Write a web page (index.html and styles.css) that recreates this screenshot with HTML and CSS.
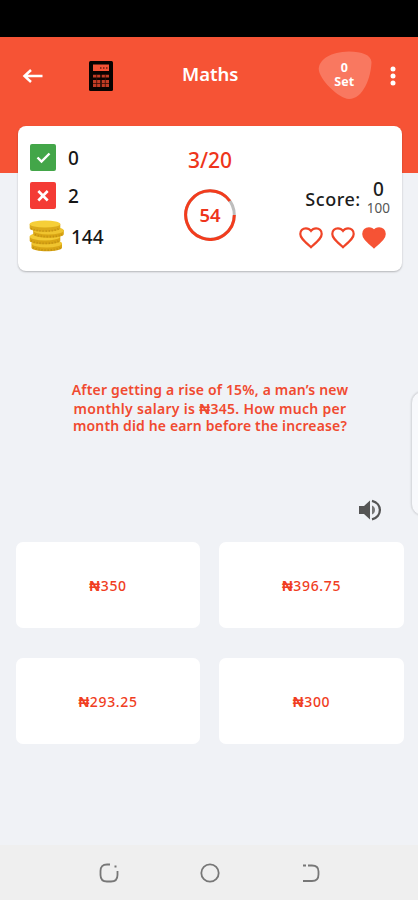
FILE: index.html
```html
<!DOCTYPE html>
<html lang="en">
<head>
<meta charset="utf-8">
<meta name="viewport" content="width=device-width">
<title>Maths</title>
<link rel="stylesheet" href="styles.css">
</head>
<body>
<div class="status"></div>
<header class="header">
  <div class="bar">
    <svg class="back" width="22" height="16" viewBox="0 0 22 16"><path d="M20.500 8H3M9 2L2.500 8L9 14" fill="none" stroke="#fff" stroke-width="2.500"/></svg>
    <svg class="calc" width="24" height="30" viewBox="0 0 24 30">
      <rect width="24" height="30" rx="1.500" fill="#080301"/>
      <rect x="4" y="3.500" width="16" height="6.500" fill="#f65335"/>
      <path d="M11 7h1.500M14 7h1.500M17 7h1.500" stroke="#6d1d10" stroke-width="1.500"/>
      <path d="M4 15.200h7.300M12.700 15.200H20" stroke="#c23c25" stroke-width="2.800"/>
      <path d="M4 22.500h7.300M12.700 22.500H20" stroke="#c23c25" stroke-width="7"/>
      <path d="M7.700 13v13M16.300 13v13M4 22.500h16" stroke="#3a0f08" stroke-width=".8"/>
    </svg>
    <h1 class="title">Maths</h1>
    <div class="set">
      <svg class="blob" width="54" height="49" viewBox="0 0 54 49"><path d="M1 16C3 8 12 1 31 .5C44 .5 53 4 53.500 11C53 27 45 48 31 48C20 48 -2 25 1 16Z" fill="#f97860"/></svg>
      <span>0</span><span>Set</span>
    </div>
    <svg class="more" width="6" height="20" viewBox="0 0 6 20" fill="#fff"><circle cx="3" cy="3" r="2.500"/><circle cx="3" cy="10" r="2.500"/><circle cx="3" cy="17" r="2.500"/></svg>
  </div>
</header>
<section class="card">
  <div class="stats">
    <div class="stat"><svg width="26" height="27" viewBox="0 0 26 27"><rect width="26" height="27" rx="2" fill="#43a649"/><path d="M7.500 13.500L11.500 17.500L19.500 9.500" fill="none" stroke="#fff" stroke-width="2.400"/></svg><span>0</span></div>
    <div class="stat"><svg width="26" height="27" viewBox="0 0 26 27"><rect width="26" height="27" rx="2" fill="#f43b35"/><path d="M8.300 9L17.700 18.500M17.700 9L8.300 18.500" stroke="#fff" stroke-width="2.600"/></svg><span>2</span></div>
    <div class="stat coins"><svg width="36" height="32" viewBox="0 0 36 32">
      <path d="M2.500 23.500v4c0 5 30.500 5 30.500 0v-4z" fill="#d9a514"/><ellipse cx="17.800" cy="23.500" rx="15.300" ry="4" fill="#efc42f"/>
      <path d="M.7 16.500v4c0 5 30.600 5 30.600 0v-4z" fill="#d9a514"/><ellipse cx="16" cy="16.500" rx="15.300" ry="4" fill="#f3ca34"/>
      <path d="M4.200 10v4c0 5 30.600 5 30.600 0v-4z" fill="#d9a514"/><ellipse cx="19.500" cy="10.500" rx="15.300" ry="4" fill="#efc42f"/>
      <path d="M.7 4v4c0 5 30.600 5 30.600 0v-4z" fill="#dba91a"/><ellipse cx="16" cy="4" rx="15.300" ry="3.600" fill="#f6cf38"/>
      <path d="M2 8.500c5 3.500 23 3.500 28 0M6 14.500c5 3 22 3 27 0M2 20.800c5 3.500 23 3.500 28 0M4 27.500c5 3.500 23 3.500 28 0" fill="none" stroke="#ad7d10" stroke-opacity=".6" stroke-width="1.800" stroke-dasharray="1 2"/>
    </svg><span>144</span></div>
  </div>
  <div class="progress">
    <div class="count">3/20</div>
    <div class="timer">
      <svg width="52" height="52" viewBox="0 0 52 52" fill="none" stroke-width="3"><circle cx="26" cy="26" r="24.300" stroke="#bdbdbd"/><path d="M50.300 26A24.300 24.300 0 1 1 45.800 12" stroke="#f23c1d"/></svg>
      <span>54</span>
    </div>
  </div>
  <div class="result">
    <div class="score"><span class="label">Score:</span><div class="fraction"><span class="points">0</span><span class="total">100</span></div></div>
    <div class="hearts">
      <svg width="24" height="22" viewBox="0 0 24 22"><path class="heart" d="M12 20.200L10.500 18.800C5 13.800 1.300 10.800 1.300 6.900C1.300 3.700 3.800 1.300 6.900 1.300C8.900 1.300 10.800 2.300 12 3.900C13.200 2.300 15.100 1.300 17.100 1.300C20.200 1.300 22.700 3.700 22.700 6.900C22.700 10.800 19 13.800 13.500 18.800Z"/></svg>
      <svg width="24" height="22" viewBox="0 0 24 22"><path class="heart" d="M12 20.200L10.500 18.800C5 13.800 1.300 10.800 1.300 6.900C1.300 3.700 3.800 1.300 6.900 1.300C8.900 1.300 10.800 2.300 12 3.900C13.200 2.300 15.100 1.300 17.100 1.300C20.200 1.300 22.700 3.700 22.700 6.900C22.700 10.800 19 13.800 13.500 18.800Z"/></svg>
      <svg width="24" height="22" viewBox="0 0 24 22"><path class="heart full" d="M12 20.200L10.500 18.800C5 13.800 1.300 10.800 1.300 6.900C1.300 3.700 3.800 1.300 6.900 1.300C8.900 1.300 10.800 2.300 12 3.900C13.200 2.300 15.100 1.300 17.100 1.300C20.200 1.300 22.700 3.700 22.700 6.900C22.700 10.800 19 13.800 13.500 18.800Z"/></svg>
    </div>
  </div>
</section>
<main class="main">
  <p class="question"><span class="l1">After getting a rise of 15%, a man’s new</span><span class="l2">monthly salary is <b class="naira">₦</b>345. How much per</span><span class="l3">month did he earn before the increase?</span></p>
  <svg class="sound" width="24" height="22" viewBox="0 0 24 22"><path d="M1 7h5l6-5.500v19L6 15H1z" fill="#555"/><path d="M14 6.500c4 1.500 4 7.500 0 9z" fill="#777"/><path d="M14 1.800c10.500 2.500 10.500 16 0 18.500" fill="none" stroke="#555" stroke-width="2.300"/></svg>
  <div class="answers">
    <div class="answer"><span><b class="naira">₦</b>350</span></div><div class="answer"><span><b class="naira">₦</b>396.75</span></div>
    <div class="answer"><span><b class="naira">₦</b>293.25</span></div><div class="answer"><span><b class="naira">₦</b>300</span></div>
  </div>
</main>
<div class="edge"></div>
<nav class="nav">
  <svg width="20" height="20" viewBox="0 0 20 20"><path d="M11 1.500H8Q1.500 1.500 1.500 8v4q0 6.500 6.500 6.500h4q6.500 0 6.500-6.500V8M15.500 3.500h2"/></svg>
  <svg width="20" height="20" viewBox="0 0 20 20"><circle cx="10" cy="10" r="8.700"/></svg>
  <svg width="20" height="20" viewBox="0 0 20 20"><path d="M2 2.500h3M7 2.500h4q6.500 0 6.500 6v3q0 6.500-6.500 6.500H2"/></svg>
</nav>
</body>
</html>
```
FILE: styles.css
```css
* { box-sizing: border-box; }
body {
  margin: 0;
  width: 418px;
  height: 900px;
  overflow: hidden;
  display: flex;
  flex-direction: column;
  background: #f0f2f6;
  font-family: "Noto Sans", "Open Sans", sans-serif;
  position: relative;
}
svg { display: block; flex: none; }
.status { height: 37px; background: #000; }
.header { height: 136px; background: #f65335; }
.bar { display: flex; align-items: center; height: 77px; padding: 0 22px; }
.calc { margin-left: 45px; }
.title {
  margin: -3px 0 0 69px;
  width: 57px;
  color: #fff;
  font-size: 18.500px;
  line-height: 28px;
  font-weight: 600;
}
.set {
  position: relative;
  width: 54px;
  height: 49px;
  margin: 0 0 0 80px;
  padding: 10px 0 0 0;
  display: flex;
  flex-direction: column;
  align-items: center;
  color: #fff;
  font-size: 12.500px;
  line-height: 14px;
  font-weight: 700;
}
.set span { position: relative; left: -1px; }
.blob { position: absolute; left: 0; top: 0; }
.more { margin-left: 18px; }
.card {
  display: flex;
  position: relative;
  width: 384px;
  height: 145px;
  margin: -47px 0 0 18px;
  padding: 18px 11px 0 11px;
  background: #fff;
  border-radius: 8px;
  box-shadow: 0 1px 2px rgba(0,0,0,.25);
}
.stats { width: 130px; display: flex; flex-direction: column; gap: 11px; }
.stat { display: flex; align-items: center; height: 27px; gap: 12px; font-size: 19px; line-height: 27px; font-weight: 500; color: #161616; }
.stat span { padding-top: 2px; }
.stat svg { margin-left: 1px; }
.stat.coins { height: 32px; gap: 6px; }
.coins svg { margin-left: 0; }
.progress { width: 102px; display: flex; flex-direction: column; align-items: center; color: #ee351b; font-weight: 500; }
.count { font-size: 21px; line-height: 32px; height: 45px; }
.timer { width: 52px; height: 52px; display: grid; place-items: center; font-size: 18.500px; line-height: 52px; font-weight: 600; }
.timer > * { grid-area: 1 / 1; }
.result { flex: 1; padding-top: 34px; display: flex; flex-direction: column; align-items: flex-end; }
.score { display: flex; align-items: center; gap: 6px; height: 41px; margin-right: 1px; color: #1c1c1c; }
.label { font-size: 18px; font-weight: 500; letter-spacing: .55px; }
.fraction { display: flex; flex-direction: column; align-items: center; }
.points { font-size: 19px; line-height: 19px; font-weight: 500; }
.total { font-size: 13.500px; line-height: 18px; color: #555; }
.hearts { display: flex; gap: 7.500px; margin: 8px 5px 0 0; }
.heart { fill: none; stroke: #f04427; stroke-width: 2.200; }
.heart.full { fill: #f65335; stroke: #f65335; }
.main { flex: 1; padding: 110px 14px 0 16px; }
.question { margin: 0; text-align: center; color: #f04a30; font-size: 14px; font-weight: 600; height: 56px; }
.question span { display: block; line-height: 18px; white-space: nowrap; }
.question .l1 { letter-spacing: .18px; }
.question .l2 { line-height: 19px; letter-spacing: .31px; }
.question .l3 { line-height: 16px; letter-spacing: .14px; }
.naira { font-family: "Liberation Sans", sans-serif; font-size: 15px; line-height: 1; }
.sound { margin: 62px 0 0 342px; }
.answers { display: grid; grid-template-columns: 184px 185px; grid-auto-rows: 86px; gap: 30px 19px; margin-top: 21px; }
.answer { display: flex; align-items: center; justify-content: center; background: #fff; border-radius: 7px; color: #f03d22; font-size: 14px; font-weight: 500; letter-spacing: .65px; }
.edge { position: absolute; left: 411px; top: 391px; width: 24px; height: 125px; border: 1px solid #d9dbdf; border-radius: 13px; background: #f8f9fc; box-shadow: 0 0 2px rgba(0,0,0,.15); }
.nav { height: 55px; background: #efefef; display: flex; justify-content: center; align-items: center; gap: 81px; padding-left: 1px; }
.nav svg { fill: none; stroke: #777; stroke-width: 1.800; }
```
